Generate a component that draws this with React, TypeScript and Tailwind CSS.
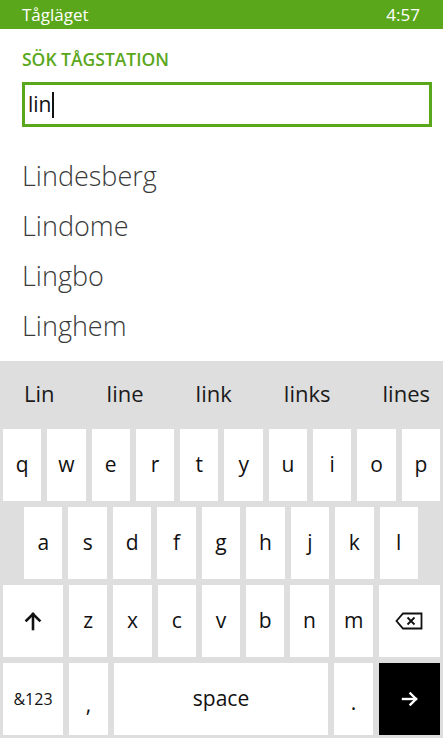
import React from 'react'

const green = '#5ba71b'
const font = { fontFamily: '"Open Sans", "Noto Sans", sans-serif' }

const row1 = ['q', 'w', 'e', 'r', 't', 'y', 'u', 'i', 'o', 'p']
const row2 = ['a', 's', 'd', 'f', 'g', 'h', 'j', 'k', 'l']
const row3 = ['z', 'x', 'c', 'v', 'b', 'n', 'm']
const stations = ['Lindesberg', 'Lindome', 'Lingbo', 'Linghem']
const suggestions = ['Lin', 'line', 'link', 'links', 'lines']

function Key({ children, className = '' }: { children?: React.ReactNode; className?: string }) {
  return (
    <div className={'bg-white h-[72px] flex items-center justify-center text-[21px] font-medium text-[#111] ' + className}>
      {children}
    </div>
  )
}

function ShiftIcon() {
  return (
    <svg width="18" height="20" viewBox="0 0 18 20" fill="none" stroke="#111" strokeWidth="2.6" strokeLinecap="square">
      <path d="M9 18V3" />
      <path d="M2.5 9.5 9 3l6.5 6.5" />
    </svg>
  )
}

function BackspaceIcon() {
  return (
    <svg width="28" height="18" viewBox="0 0 28 18" fill="none" stroke="#111" strokeWidth="1.8">
      <path d="M8 1.5h18.5v15H8L1.5 9z" />
      <path d="M12.5 5.5l7 7M19.5 5.5l-7 7" />
    </svg>
  )
}

function EnterIcon() {
  return (
    <svg width="18" height="16" viewBox="0 0 18 16" fill="none" stroke="#fff" strokeWidth="2.4" strokeLinecap="square">
      <path d="M2 8h13" />
      <path d="M9.5 2.5 15 8l-5.5 5.5" />
    </svg>
  )
}

export default function App() {
  return (
    <div className="w-[443px] h-[738px] bg-white flex flex-col overflow-hidden" style={font}>
      {/* status bar */}
      <div className="h-[29px] px-[22px] flex items-center justify-between text-white text-[17px]" style={{ background: green }}>
        <span>Tågläget</span>
        <span className="mr-[1px]">4:57</span>
      </div>

      <div className="px-[22px]">
        <h1 className="mt-[20px] h-[20px] leading-[20px] text-[17.5px] font-semibold" style={{ color: green }}>
          SÖK TÅGSTATION
        </h1>
        <div className="mt-[13px] h-[45px] border-[3px] flex items-center px-[3px] text-[21px] text-[#111] mr-[-11px]" style={{ borderColor: green }}>
          <span>lin</span>
          <span className="w-[2px] h-[26px] bg-[#111] ml-[1px]" />
        </div>
        <div className="mt-[24px]">
          {stations.map(s => (
            <div key={s} className="h-[50px] flex items-center text-[27px] font-light text-[#3a3a3a]">{s}</div>
          ))}
        </div>
      </div>

      {/* keyboard */}
      <div className="mt-auto bg-[#dedede] pb-[3px]">
        <div className="h-[64px] flex items-center justify-between pl-[24px] pr-[13px] text-[22px] text-[#1a1a1a]">
          {suggestions.map(s => <span key={s}>{s}</span>)}
        </div>
        <div className="mt-[4px] flex flex-col gap-[6px]">
          <div className="grid grid-cols-10 gap-[6px] px-[3px]">
            {row1.map(k => <Key key={k}>{k}</Key>)}
          </div>
          <div className="grid grid-cols-9 gap-[6px] pl-[24px] pr-[25px]">
            {row2.map(k => <Key key={k}>{k}</Key>)}
          </div>
          <div className="flex gap-[6px] px-[3px]">
            <Key className="w-[60px]"><ShiftIcon /></Key>
            {row3.map(k => <Key key={k} className="flex-1">{k}</Key>)}
            <Key className="w-[61px]"><BackspaceIcon /></Key>
          </div>
          <div className="flex gap-[6px] px-[3px]">
            <Key className="w-[60px] !text-[16px] !font-normal">&amp;123</Key>
            <Key className="w-[39px] pt-[12px]">,</Key>
            <Key className="flex-1">space</Key>
            <Key className="w-[39px] pt-[8px]">.</Key>
            <Key className="w-[61px] !bg-black"><EnterIcon /></Key>
          </div>
        </div>
      </div>
    </div>
  )
}
